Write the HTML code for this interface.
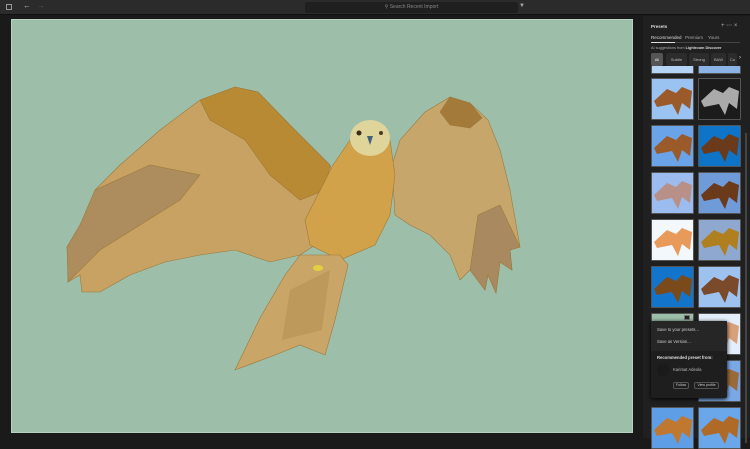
<!DOCTYPE html>
<html><head><meta charset="utf-8"><style>
*{margin:0;padding:0;box-sizing:border-box}
body{width:750px;height:438px;overflow:hidden;background:#1a1a1a;font-family:"Liberation Sans",sans-serif;position:relative;color:#ddd}
.top{position:absolute;left:0;top:0;width:750px;height:15px;background:#2b2b2b;border-bottom:1px solid #111}
.search{position:absolute;left:305px;top:2px;width:213px;height:11px;background:#1f1f1f;border-radius:2px;font-size:5px;color:#888;text-align:center;line-height:11px}
.canvas{position:absolute;left:11px;top:19px;width:622px;height:414px;background:#9dbea9;border:1px solid #b7d2c0}
.panel{position:absolute;left:643px;top:16px;width:107px;height:422px;background:#202020}
.t{position:absolute;font-size:4.5px;color:#ddd;white-space:nowrap}
.chip{position:absolute;top:53px;height:13px;background:#2c2c2c;border-radius:2px;font-size:4px;color:#bbb;text-align:center;line-height:13px}
.tile{position:absolute;width:43px;height:42px;border:1px solid #555;border-radius:1px;overflow:hidden}
.tile svg{position:absolute;left:0;top:0}
.pop{position:absolute;left:651px;top:321px;width:76px;height:77px;background:#1e1e1e;border-radius:2px;box-shadow:0 1px 4px #000}
.btn{position:absolute;height:7px;border:1px solid #555;border-radius:2px;font-size:3.5px;color:#ccc;text-align:center;line-height:5px}
</style></head><body>
<div class="top">
<div style="position:absolute;left:6px;top:4px;width:6px;height:6px;border:1px solid #999"></div>
<div style="position:absolute;left:23px;top:1px;font-size:8px;color:#bbb">←</div>
<div style="position:absolute;left:37px;top:1px;font-size:8px;color:#555">→</div>
<div class="search">&#9906; Search Recent Import</div>
<div style="position:absolute;left:519px;top:3px;font-size:6px;color:#aaa">▼</div>
</div>
<div class="canvas"></div>
<svg style="position:absolute;left:0;top:0" width="750" height="438">
<g stroke="#9c7a3c" stroke-width="0.6">
<!-- left wing -->
<polygon points="340,200 330,165 290,125 258,92 235,87 200,100 160,130 120,165 95,190 100,195 80,225 67,247 75,245 70,265 68,282 80,275 82,292 100,292 130,275 165,262 200,255 235,250 270,262 300,255 330,235" fill="#c7a262"/>
<polygon points="258,92 235,87 200,100 210,120 245,140 270,175 300,200 325,190 330,165 290,125" fill="#b98a34"/>
<polygon points="95,190 150,165 200,175 180,200 140,225 100,250 68,282 67,247 80,225" fill="#ad8c5e"/>
<!-- right wing -->
<polygon points="392,165 400,140 425,112 450,97 470,103 488,120 500,150 510,190 520,247 510,250 512,270 500,262 496,293 488,275 485,290 470,270 460,280 450,255 430,235 410,225 395,215" fill="#c7a66c"/>
<polygon points="450,97 470,103 482,118 470,128 450,125 440,112" fill="#a47a3a"/>
<polygon points="478,215 500,205 520,247 510,250 512,270 500,262 496,293 488,275 485,290 470,270" fill="#a98a60"/>
<!-- body -->
<polygon points="333,165 350,140 390,140 395,175 390,215 375,245 340,260 310,245 305,220" fill="#d1a24a"/>
<!-- tail -->
<polygon points="300,255 340,255 348,265 335,320 325,355 300,345 275,355 235,370 260,318 285,275" fill="#c9a568"/>
<polygon points="290,290 330,270 322,330 282,340" fill="#bd9a5c" stroke="none"/>
<ellipse cx="370" cy="138" rx="20" ry="18" fill="#dfd49a" stroke="none"/>
<circle cx="359" cy="133" r="2.5" fill="#3a2a1a" stroke="none"/><circle cx="381" cy="133" r="2" fill="#4a3a2a" stroke="none"/>
<polygon points="367,136 373,136 370,145" fill="#44607a" stroke="none"/>
<ellipse cx="318" cy="268" rx="5" ry="3" fill="#e3d040" stroke="none"/>
</g>
</svg>
<div class="panel">
<div style="position:absolute;right:3px;top:117px;width:2px;height:310px;background:#444"></div>
</div>
<div class="t" style="left:651px;top:24px;font-weight:bold">Presets</div>
<div class="t" style="left:721px;top:22px;font-size:6px;color:#aaa">+ ⋯ ×</div>
<div class="t" style="left:651px;top:35px">Recommended</div>
<div class="t" style="left:685px;top:35px;color:#aaa">Premium</div>
<div class="t" style="left:708px;top:35px;color:#aaa">Yours</div>
<div style="position:absolute;left:651px;top:42px;width:89px;height:1px;background:#444"></div>
<div style="position:absolute;left:651px;top:42px;width:24px;height:1px;background:#ddd"></div>
<div class="t" style="left:651px;top:46px;font-size:3.8px;color:#aaa">AI suggestions from <b style="color:#ddd">Lightroom Discover</b></div>
<div class="chip" style="left:651px;width:12px;background:#555;color:#eee">All</div>
<div class="chip" style="left:666px;width:21px">Subtle</div>
<div class="chip" style="left:689px;width:20px">Strong</div>
<div class="chip" style="left:711px;width:15px">B&amp;W</div>
<div class="chip" style="left:728px;width:9px">Co</div>
<div class="t" style="left:739px;top:55px;font-size:6px">›</div>
<div class="tile" style="left:651px;top:66px;height:8px;background:#b5d4f5;border-top:none"></div>
<div class="tile" style="left:698px;top:66px;height:8px;background:#8cb3e6;border-top:none"></div>

<div class="tile" style="left:651px;top:78px;background:#9bc3f2"><svg width="43" height="42"><polygon points="2,22 15,10 24,14 30,8 40,12 38,30 30,24 26,36 20,25 5,28" fill="#9a5a2a"/></svg></div>
<div class="tile" style="left:698px;top:78px;background:#1c1c1c"><svg width="43" height="42"><polygon points="2,22 15,10 24,14 30,8 40,12 38,30 30,24 26,36 20,25 5,28" fill="#aaa"/></svg></div>
<div class="tile" style="left:651px;top:125px;background:#6aa3e8"><svg width="43" height="42"><polygon points="2,22 15,10 24,14 30,8 40,12 38,30 30,24 26,36 20,25 5,28" fill="#9a5a2a"/></svg></div>
<div class="tile" style="left:698px;top:125px;background:#0d74c8"><svg width="43" height="42"><polygon points="2,22 15,10 24,14 30,8 40,12 38,30 30,24 26,36 20,25 5,28" fill="#6a3a1a"/></svg></div>
<div class="tile" style="left:651px;top:172px;background:#9cbcf0"><svg width="43" height="42"><polygon points="2,22 15,10 24,14 30,8 40,12 38,30 30,24 26,36 20,25 5,28" fill="#b89088"/></svg></div>
<div class="tile" style="left:698px;top:172px;background:#6f9bd8"><svg width="43" height="42"><polygon points="2,22 15,10 24,14 30,8 40,12 38,30 30,24 26,36 20,25 5,28" fill="#6a3a1a"/></svg></div>
<div class="tile" style="left:651px;top:219px;background:#f2f8fc"><svg width="43" height="42"><polygon points="2,22 15,10 24,14 30,8 40,12 38,30 30,24 26,36 20,25 5,28" fill="#e89a5a"/></svg></div>
<div class="tile" style="left:698px;top:219px;background:#8fa8cf"><svg width="43" height="42"><polygon points="2,22 15,10 24,14 30,8 40,12 38,30 30,24 26,36 20,25 5,28" fill="#b08020"/></svg></div>
<div class="tile" style="left:651px;top:266px;background:#1374cc"><svg width="43" height="42"><polygon points="2,22 15,10 24,14 30,8 40,12 38,30 30,24 26,36 20,25 5,28" fill="#7a4a1a"/></svg></div>
<div class="tile" style="left:698px;top:266px;background:#9ec2f0"><svg width="43" height="42"><polygon points="2,22 15,10 24,14 30,8 40,12 38,30 30,24 26,36 20,25 5,28" fill="#7a4a2a"/></svg></div>
<div class="tile" style="left:651px;top:313px;background:#9dbea9"></div>
<div class="tile" style="left:698px;top:313px;background:#e3eefa"><svg width="43" height="42"><polygon points="20,10 30,8 40,12 38,30 30,24 26,36" fill="#d8a078"/></svg></div>
<div class="tile" style="left:698px;top:360px;background:#7aa8e6"><svg width="43" height="42"><polygon points="20,10 30,8 40,12 38,30 30,24 26,36" fill="#9a6a3a"/></svg></div>
<div class="tile" style="left:651px;top:407px;background:#5d9ee6"><svg width="43" height="42"><polygon points="2,22 15,10 24,14 30,8 40,12 38,30 30,24 26,36 20,25 5,28" fill="#c07830"/></svg></div>
<div class="tile" style="left:698px;top:407px;background:#6aa6ea"><svg width="43" height="42"><polygon points="2,22 15,10 24,14 30,8 40,12 38,30 30,24 26,36 20,25 5,28" fill="#b06a28"/></svg></div>
<div style="position:absolute;left:684px;top:315px;width:6px;height:5px;background:#222;border:1px solid #777"></div>
<div class="pop">
<div style="position:absolute;left:0;top:0;width:76px;height:30px;background:#262626"></div>
<div class="t" style="left:6px;top:6px;color:#ccc;font-size:4.2px">Save to your presets...</div>
<div class="t" style="left:6px;top:18px;color:#ccc;font-size:4.2px">Save as Version...</div>
<div class="t" style="left:6px;top:34px;font-weight:bold;font-size:4.2px">Recommended preset from:</div>
<div style="position:absolute;left:6px;top:43px;width:12px;height:12px;border-radius:50%;background:#1a1a1a"></div>
<div class="t" style="left:22px;top:46px;color:#bbb;font-size:4.2px">Karimat Adeola</div>
<div class="btn" style="left:22px;top:61px;width:16px">Follow</div>
<div class="btn" style="left:43px;top:61px;width:25px">View profile</div>
</div>
</body></html>
